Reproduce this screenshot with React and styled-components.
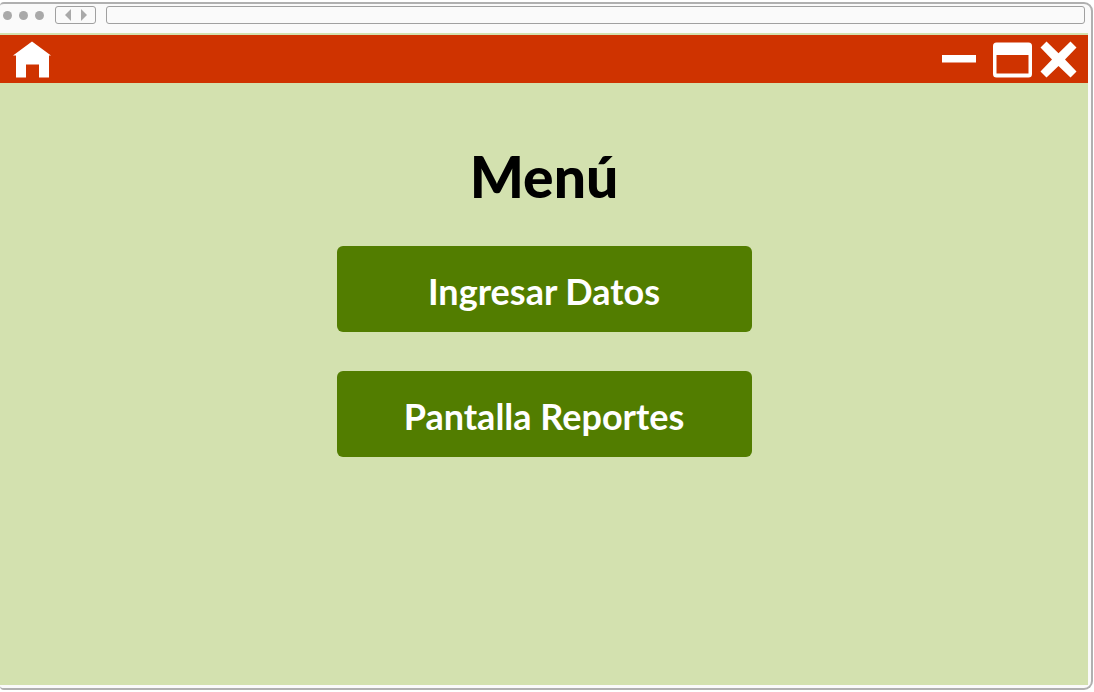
import React from "react";
import styled, { createGlobalStyle } from "styled-components";

const GlobalStyle = createGlobalStyle`
  * { box-sizing: border-box; }
  body { margin: 0; background: #ffffff; }
`;

const Page = styled.div`
  display: flex;
  min-height: 100vh;
  padding: 2px 1px 2px 0;
`;

const Browser = styled.div`
  flex: 1;
  min-width: 0;
  display: flex;
  flex-direction: column;
  padding: 0 3px 3px 0;
  background: #fafafa;
  border: 2px solid #b0b0b0;
  border-left: 0;
  border-radius: 4px 9px 9px 4px;
`;

const Chrome = styled.div`
  display: flex;
  align-items: center;
  height: 29px;
  padding: 0 3px 7px;
`;

const Dots = styled.div`
  display: flex;
  gap: 7px;
  margin-right: 11px;
`;

const Dot = styled.span`
  width: 9px;
  height: 9px;
  border-radius: 50%;
  background: #a9a9a9;
`;

const History = styled.div`
  display: flex;
  justify-content: center;
  gap: 4px;
  width: 41px;
  height: 18px;
  margin-right: 10px;
  border: 1px solid #a0a0a0;
  border-radius: 3px;
`;

const HistoryButton = styled.button`
  display: flex;
  align-items: center;
  justify-content: center;
  width: 12px;
  padding: 0;
  border: 0;
  background: none;
  color: #a9a9a9;
`;

const Address = styled.input`
  flex: 1;
  min-width: 0;
  height: 18px;
  padding: 0 6px;
  border: 1px solid #a0a0a0;
  border-radius: 3px;
  background: #fafafa;
  font: 12px "Liberation Sans", sans-serif;
`;

const Screen = styled.div`
  flex: 1;
  display: flex;
  flex-direction: column;
  padding-top: 2px;
  background: #d3e1af;
`;

const TitleBar = styled.header`
  display: flex;
  align-items: center;
  justify-content: space-between;
  height: 48px;
  padding: 0 11px 0 13px;
  background: #cf3300;
`;

const WindowControls = styled.div`
  display: flex;
  align-items: center;
  gap: ${(p) => p.$gap}px;
`;

const IconButton = styled.button`
  display: flex;
  padding: 0;
  border: 0;
  background: none;
  color: #ffffff;
  cursor: pointer;
`;

const Menu = styled.main`
  display: flex;
  flex-direction: column;
  align-items: center;
  padding: 55px 16px;
`;

const Title = styled.h1`
  margin: 0 0 32px;
  color: #000000;
  font: 900 57px/76px Lato, sans-serif;
`;

const Actions = styled.nav`
  display: flex;
  flex-direction: column;
  gap: 39px;
  width: 100%;
  max-width: 415px;
`;

const ActionButton = styled.button`
  height: 86px;
  padding: 4px 0 0;
  border: 0;
  border-radius: 6px;
  background: #527d00;
  color: #ffffff;
  font: bold 36px/48px Lato, sans-serif;
  cursor: pointer;
`;

const actions = ["Ingresar Datos", "Pantalla Reportes"];

export default function App() {
  return (
    <>
      <GlobalStyle />
      <Page>
        <Browser>
          <Chrome>
            <Dots>
              <Dot />
              <Dot />
              <Dot />
            </Dots>
            <History>
              <HistoryButton aria-label="Atrás">
                <svg width="6" height="12" viewBox="0 0 6 12" fill="currentColor">
                  <path d="M6 0v12L0 6z" />
                </svg>
              </HistoryButton>
              <HistoryButton aria-label="Adelante">
                <svg width="6" height="12" viewBox="0 0 6 12" fill="currentColor">
                  <path d="M0 0v12l6-6z" />
                </svg>
              </HistoryButton>
            </History>
            <Address type="text" aria-label="Dirección" />
          </Chrome>
          <Screen>
            <TitleBar>
              <IconButton aria-label="Inicio">
                <svg width="38" height="37" viewBox="0 0 38 37" fill="currentColor">
                  <path d="M19 0.5L38 14.5H36V36.500H26V23.500H13V36.500H3V14.500H0z" />
                </svg>
              </IconButton>
              <WindowControls $gap={17}>
                <IconButton aria-label="Minimizar">
                  <svg width="34" height="37" viewBox="0 0 34 37" fill="currentColor">
                    <path d="M0 14h34v7.500H0z" />
                  </svg>
                </IconButton>
                <WindowControls $gap={8}>
                  <IconButton aria-label="Maximizar">
                    <svg width="39" height="37" viewBox="0 0 39 37" fill="currentColor">
                      <path
                        fillRule="evenodd"
                        d="M3.500 1.500h32A3.500 3.500 0 0 1 39 5v28a3.500 3.500 0 0 1-3.500 3.500h-32A3.500 3.500 0 0 1 0 33V5a3.500 3.500 0 0 1 3.500-3.500zM3.500 14v18.500h32V14z"
                      />
                    </svg>
                  </IconButton>
                  <IconButton aria-label="Cerrar">
                    <svg width="37" height="37" viewBox="0 0 37 37" fill="currentColor">
                      <path d="M6.500 0.500L18.500 12.200 30.500 0.500 36.500 6.500 25 18.500 36.500 30.500 30.500 36.500 18.500 25 6.500 36.500 0.500 30.500 12 18.500 0.500 6.500z" />
                    </svg>
                  </IconButton>
                </WindowControls>
              </WindowControls>
            </TitleBar>
            <Menu>
              <Title>Menú</Title>
              <Actions>
                {actions.map((label) => (
                  <ActionButton key={label}>{label}</ActionButton>
                ))}
              </Actions>
            </Menu>
          </Screen>
        </Browser>
      </Page>
    </>
  );
}
